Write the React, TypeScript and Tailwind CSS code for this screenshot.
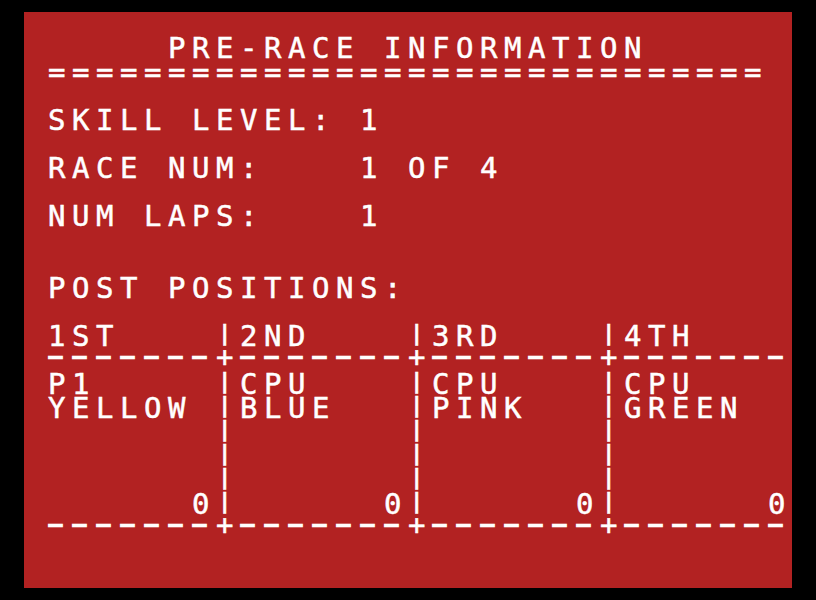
import React from "react";

const rows: string[] = [
  "",
  "     PRE-RACE INFORMATION",
  "==============================",
  "",
  "SKILL LEVEL: 1",
  "",
  "RACE NUM:    1 OF 4",
  "",
  "NUM LAPS:    1",
  "",
  "",
  "POST POSITIONS:",
  "",
  "1ST    |2ND    |3RD    |4TH",
  "-------+-------+-------+-------",
  "P1     |CPU    |CPU    |CPU",
  "YELLOW |BLUE   |PINK   |GREEN",
  "       |       |       |",
  "       |       |       |",
  "       |       |       |",
  "      0|      0|      0|      0",
  "-------+-------+-------+-------",
  "",
  "",
];

function Row({ text }: { text: string }) {
  const isRule = text.startsWith("---");
  const parts: React.ReactNode[] = [];
  let buf = "";
  let k = 0;
  const flush = () => {
    if (buf) {
      parts.push(<span key={k++}>{buf}</span>);
      buf = "";
    }
  };
  for (const ch of text) {
    if (isRule && ch === "-") {
      flush();
      parts.push(
        <span key={k++} className="inline-block w-[24px] align-top">
          <span className="inline-block text-[14px] leading-[8px] tracking-[0px] [-webkit-text-stroke:2.3px_white] origin-left scale-x-[2.54] -translate-x-[3.2px] -translate-y-[8.4px]">
            -
          </span>
        </span>
      );
    } else if (isRule && ch === "+") {
      flush();
      parts.push(
        <span key={k++} className="inline-block w-[24px] align-top leading-[18px]">
          +
        </span>
      );
    } else if (ch === "|") {
      flush();
      parts.push(
        <span key={k++} className="inline-block w-[24px] align-top origin-top scale-y-[0.72]">
          |
        </span>
      );
    } else {
      buf += ch;
    }
  }
  flush();
  return <div className="h-[24px]">{parts}</div>;
}

export default function App() {
  return (
    <div className="w-[816px] h-[600px] bg-black pt-[12px] pl-[24px]">
      <div
        className="w-[768px] h-[576px] bg-[#b22222] pl-[24px] text-white text-[29px] leading-[24px] tracking-[6.5405px] whitespace-pre overflow-hidden [-webkit-text-stroke:0.5px_white]"
        style={{ fontFamily: '"DejaVu Sans Mono", "Liberation Mono", monospace' }}
      >
        {rows.map((r, i) => (
          <Row key={i} text={r} />
        ))}
      </div>
    </div>
  );
}
